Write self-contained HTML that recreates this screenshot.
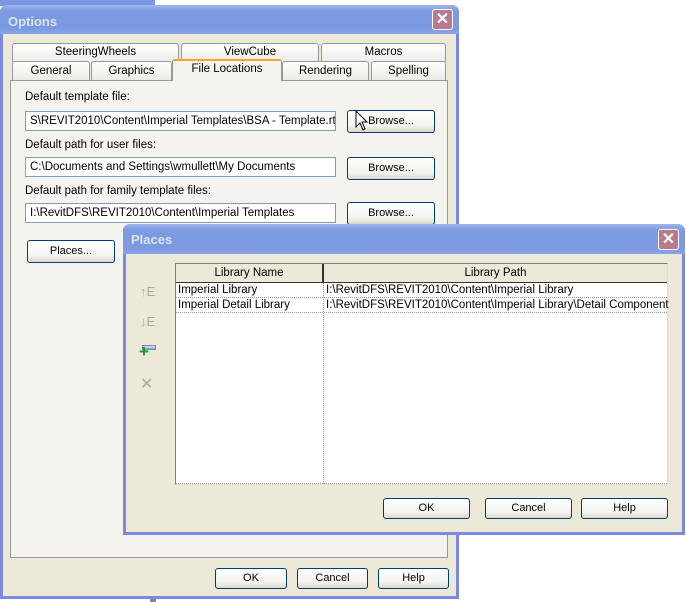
<!DOCTYPE html><html><head><style>
*{box-sizing:border-box}
body{margin:0;width:686px;height:602px;background:#fff;position:relative;overflow:hidden;font-family:"Liberation Sans",Arial,sans-serif;font-size:11px;color:#000}
.a{position:absolute}
.win{background:#ece9d8;border:3px solid #7d88e0;border-top:none;border-radius:7px 7px 0 0}
.tb{position:absolute;left:-3px;right:-3px;top:0;background:linear-gradient(#9db6ec,#7d9be3 20%,#7b98e2 80%,#8aa5e8);border-radius:7px 7px 0 0;color:#d8e4f8;font-weight:bold;font-size:13px;padding-left:8px}
.x{position:absolute;width:21px;height:21px;background:#b87a8e;border:1px solid #fff;border-radius:3px;color:#fff;font-size:16px;line-height:19px;text-align:center;font-weight:bold}
.btn{position:absolute;border:1px solid #003c74;border-radius:3px;background:linear-gradient(#fff,#f3f3ef 70%,#dcd8cc);text-align:center;font-size:11px;white-space:nowrap}
.inp{position:absolute;background:#fff;border:1px solid #7f9db9;padding:2px 4px;white-space:nowrap;overflow:hidden;font-size:11.5px;line-height:14px}
.tab{position:absolute;border:1px solid #919b9c;border-bottom:none;border-radius:3px 3px 0 0;background:linear-gradient(#fff,#ecebe6);text-align:center;font-size:11.5px;line-height:17px}
.lbl{position:absolute;font-size:11.5px;white-space:nowrap}
</style></head><body>
<div class="a" style="left:0;top:0;width:155px;height:6px;background:#7d98e0"></div>
<div class="a" style="left:150px;top:598px;width:6px;height:4px;background:#888"></div>

<div class="a win" style="left:0;top:5px;width:459px;height:594px">
 <div class="tb" style="height:29px;line-height:33px">Options</div>
 <div class="x" style="left:429px;top:4px">✕</div>
</div>
<div class="a" style="left:10px;top:80px;width:438px;height:478px;background:#f4f3ee;border:1px solid #919b9c"></div>
<div class="tab" style="left:12px;top:43px;width:167px;height:19px">SteeringWheels</div>
<div class="tab" style="left:181px;top:43px;width:138px;height:19px">ViewCube</div>
<div class="tab" style="left:321px;top:43px;width:125px;height:19px">Macros</div>
<div class="tab" style="left:12px;top:61px;width:78px;height:19px;line-height:19px">General</div>
<div class="tab" style="left:91px;top:61px;width:81px;height:19px;line-height:19px">Graphics</div>
<div class="tab" style="left:172px;top:59px;width:110px;height:22px;background:#f4f3ee;border-top:2px solid #f0a830;line-height:17px;z-index:2">File Locations</div>
<div class="tab" style="left:282px;top:61px;width:87px;height:19px;line-height:19px">Rendering</div>
<div class="tab" style="left:371px;top:61px;width:75px;height:19px;line-height:19px">Spelling</div>

<div class="lbl" style="left:25px;top:91px">Default template file:</div>
<div class="inp" style="left:25px;top:111px;width:311px;height:20px">S\REVIT2010\Content\Imperial Templates\BSA - Template.rte</div>
<div class="btn" style="left:347px;top:110px;width:88px;height:23px;line-height:21px">Browse...</div>
<div class="lbl" style="left:25px;top:139px">Default path for user files:</div>
<div class="inp" style="left:25px;top:157px;width:311px;height:20px">C:\Documents and Settings\wmullett\My Documents</div>
<div class="btn" style="left:347px;top:157px;width:88px;height:23px;line-height:21px">Browse...</div>
<div class="lbl" style="left:25px;top:185px">Default path for family template files:</div>
<div class="inp" style="left:25px;top:203px;width:311px;height:20px">I:\RevitDFS\REVIT2010\Content\Imperial Templates</div>
<div class="btn" style="left:347px;top:202px;width:88px;height:23px;line-height:21px">Browse...</div>
<div class="btn" style="left:27px;top:240px;width:88px;height:23px;line-height:21px">Places...</div>

<div class="btn" style="left:215px;top:568px;width:72px;height:21px;line-height:19px">OK</div>
<div class="btn" style="left:297px;top:568px;width:71px;height:21px;line-height:19px">Cancel</div>
<div class="btn" style="left:378px;top:568px;width:71px;height:21px;line-height:19px">Help</div>

<div class="a win" style="left:123px;top:224px;width:562px;height:311px;border-bottom:3px solid #7d88e0">
 <div class="tb" style="height:30px;line-height:32px">Places</div>
 <div class="x" style="left:532px;top:5px">✕</div>
</div>
<div class="a" style="left:175px;top:263px;width:493px;height:222px;background:#fff;border:1px solid #808080;border-right-color:#ddd;border-bottom-color:#ddd"></div>
<div class="a" style="left:176px;top:264px;width:148px;height:19px;background:#ece9d8;border-right:2px solid #333;border-bottom:1px solid #333;text-align:center;line-height:18px;font-size:11.5px">Library Name</div>
<div class="a" style="left:324px;top:264px;width:343px;height:19px;background:#ece9d8;border-bottom:1px solid #333;text-align:center;line-height:18px;font-size:11.5px">Library Path</div>
<div class="a" style="left:323px;top:283px;width:0;height:201px;border-left:1px dotted #999"></div>
<div class="a" style="left:176px;top:297px;width:491px;border-top:1px dotted #999"></div>
<div class="a" style="left:176px;top:312px;width:491px;border-top:1px dotted #999"></div>
<div class="a" style="left:176px;top:483px;width:491px;border-top:1px dotted #999"></div>
<div class="lbl" style="left:178px;top:284px">Imperial Library</div>
<div class="lbl" style="left:326px;top:284px">I:\RevitDFS\REVIT2010\Content\Imperial Library</div>
<div class="lbl" style="left:178px;top:299px">Imperial Detail Library</div>
<div class="lbl" style="left:326px;top:299px">I:\RevitDFS\REVIT2010\Content\Imperial Library\Detail Component</div>
<div class="lbl" style="left:140px;top:284px;color:#aaa;font-size:13px">↑E</div>
<div class="lbl" style="left:140px;top:314px;color:#aaa;font-size:13px">↓E</div>
<div class="a" style="left:142px;top:345px;width:14px;height:5px;background:linear-gradient(#dde6f6,#8fa8d8);border:1px solid #6c8ac0"></div>
<div class="lbl" style="left:139px;top:342px;color:#1a9a1a;font-size:17px;font-weight:bold">+</div>
<div class="lbl" style="left:140px;top:374px;color:#aaa;font-size:16px">✕</div>

<div class="btn" style="left:383px;top:498px;width:87px;height:21px;line-height:19px">OK</div>
<div class="btn" style="left:485px;top:498px;width:87px;height:21px;line-height:19px">Cancel</div>
<div class="btn" style="left:581px;top:498px;width:87px;height:21px;line-height:19px">Help</div>
<svg class="a" style="left:355px;top:110px" width="14" height="22" viewBox="0 0 14 22"><path d="M1 1 L1 17 L5 13 L8 20 L10 19 L7 12 L12 12 Z" fill="#fff" stroke="#000"/></svg>
</body></html>
